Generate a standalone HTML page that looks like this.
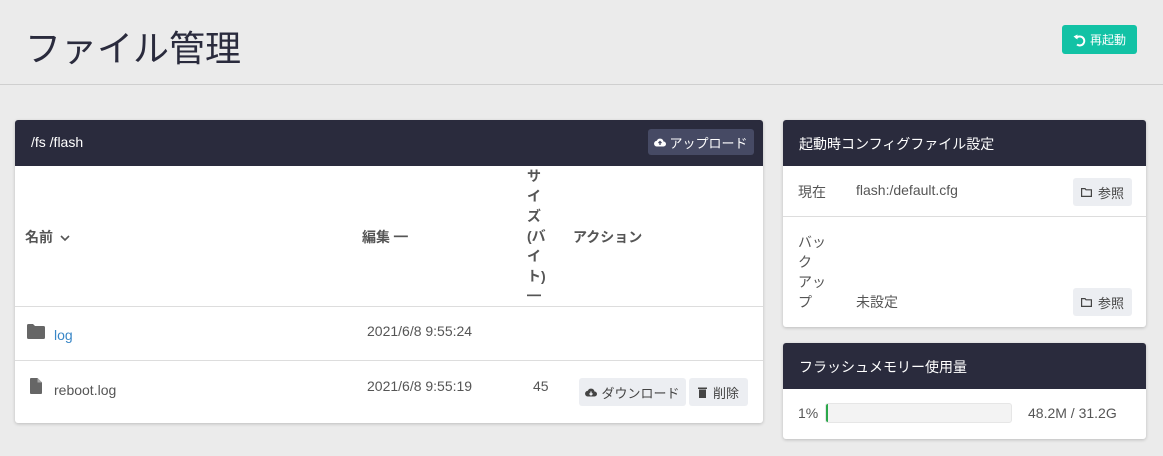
<!DOCTYPE html>
<html><head><meta charset="utf-8"><style>
*{box-sizing:border-box;margin:0;padding:0}
body{width:1163px;height:456px;background:#ebebeb;font-family:"Liberation Sans","Noto Sans CJK JP",sans-serif;color:#555;position:relative;overflow:hidden;font-size:14px}
.a{position:absolute;white-space:nowrap}
.card{position:absolute;background:#fff;box-shadow:0 1px 3px rgba(0,0,0,.2);border-radius:3px;overflow:hidden}
.hd{position:absolute;left:0;right:0;top:0;height:46px;background:#2a2b3d;color:#fff;font-size:14px}
.btn{position:absolute;background:#eceef2;border-radius:3px;color:#444;font-size:13px;display:flex;align-items:center;justify-content:center;gap:6px}
.hr{position:absolute;left:0;right:0;height:1px;background:#ddd}
</style></head><body>
<div class="a" style="left:25px;top:20px;font-size:36px;color:#2a2b3d">ファイル管理</div>
<div style="position:absolute;left:0;right:0;top:84px;height:1px;background:#cfcfcf"></div>
<div class="btn" style="left:1062px;top:25px;width:75px;height:29px;background:#12c2a5;color:#fff;font-size:12px;gap:4px">
<svg width="13" height="14" viewBox="0 0 13 14"><path d="M3 5.5A4.5 4.5 0 1 1 4 11.5" fill="none" stroke="#fff" stroke-width="2"/><path d="M0.5 3.5L4.5 1.5L4.5 6.5Z" fill="#fff"/></svg>再起動</div>

<div class="card" style="left:15px;top:120px;width:748px;height:303px">
 <div class="hd"><span class="a" style="left:16px;top:14px">/fs /flash</span>
  <div class="btn" style="left:633px;top:9px;width:106px;height:26px;background:#464a64;color:#fff;gap:3px">
  <svg width="12" height="10" viewBox="0 0 12 10"><path d="M3 9.5H9.5A2.5 2.5 0 0 0 9.5 4.5A3.5 3.5 0 0 0 2.8 3.8A2.8 2.8 0 0 0 3 9.5Z" fill="#fff"/><path d="M6 8V4.5M4.5 6L6 4.5L7.5 6" stroke="#464a64" stroke-width="1.3" fill="none"/></svg>アップロード</div></div>
 <div class="a" style="left:10px;top:107px;font-weight:bold;color:#555">名前 <svg width="10" height="7" viewBox="0 0 10 7" style="margin-left:3px"><path d="M1 1L5 5L9 1" fill="none" stroke="#555" stroke-width="1.6"/></svg></div>
 <div class="a" style="left:347px;top:107px;font-weight:bold">編集 ━</div>
 <div class="a" style="left:512px;top:46px;font-weight:bold;line-height:20px;white-space:normal;width:20px">サ<br>イ<br>ズ<br>(バ<br>イ<br>ト)<br>━</div>
 <div class="a" style="left:558px;top:107px;font-weight:bold">アクション</div>
 <div class="hr" style="top:186px"></div>
 <svg class="a" style="left:12px;top:204px" width="18" height="15" viewBox="0 0 18 15"><path d="M0 1.5Q0 0 1.5 0H6L8 2H16.5Q18 2 18 3.5V13.5Q18 15 16.5 15H1.5Q0 15 0 13.5Z" fill="#666"/></svg>
 <div class="a" style="left:39px;top:207px;color:#3a87c7">log</div>
 <div class="a" style="left:352px;top:203px">2021/6/8 9:55:24</div>
 <div class="hr" style="top:240px"></div>
 <svg class="a" style="left:15px;top:258px" width="12" height="16" viewBox="0 0 12 16"><path d="M0 1Q0 0 1 0H7.5L12 4.5V15Q12 16 11 16H1Q0 16 0 15Z" fill="#666"/><path d="M7.5 0V4.5H12" fill="#aaa"/></svg>
 <div class="a" style="left:39px;top:262px">reboot.log</div>
 <div class="a" style="left:352px;top:258px">2021/6/8 9:55:19</div>
 <div class="a" style="left:518px;top:258px">45</div>
 <div class="btn" style="left:564px;top:258px;width:107px;height:28px;gap:4px">
 <svg width="12" height="10" viewBox="0 0 12 10"><path d="M3 9.5H9.5A2.5 2.5 0 0 0 9.5 4.5A3.5 3.5 0 0 0 2.8 3.8A2.8 2.8 0 0 0 3 9.5Z" fill="#444"/><path d="M6 4.5V8M4.5 6.5L6 8L7.5 6.5" stroke="#eceef2" stroke-width="1.3" fill="none"/></svg>ダウンロード</div>
 <div class="btn" style="left:674px;top:258px;width:59px;height:28px">
 <svg width="9" height="11" viewBox="0 0 9 11"><rect x="0" y="0.5" width="9" height="1.5" fill="#444"/><rect x="1" y="2.5" width="7" height="8.5" fill="#444"/></svg>削除</div>
</div>

<div class="card" style="left:783px;top:120px;width:363px;height:207px">
 <div class="hd"><span class="a" style="left:16px;top:14px">起動時コンフィグファイル設定</span></div>
 <div class="a" style="left:15px;top:62px">現在</div>
 <div class="a" style="left:73px;top:62px">flash:/default.cfg</div>
 <div class="btn" style="left:290px;top:58px;width:59px;height:28px"><svg width="11" height="9" viewBox="0 0 11 9"><path d="M0.6 0.6H4L5 1.8H10.4V8.4H0.6Z" fill="none" stroke="#444" stroke-width="1.2"/></svg>参照</div>
 <div class="hr" style="top:96px"></div>
 <div class="a" style="left:15px;top:112px;line-height:20px;white-space:normal;width:36px">バッ<br>ク<br>アッ<br>プ</div>
 <div class="a" style="left:73px;top:172px">未設定</div>
 <div class="btn" style="left:290px;top:168px;width:59px;height:28px"><svg width="11" height="9" viewBox="0 0 11 9"><path d="M0.6 0.6H4L5 1.8H10.4V8.4H0.6Z" fill="none" stroke="#444" stroke-width="1.2"/></svg>参照</div>
</div>

<div class="card" style="left:783px;top:343px;width:363px;height:96px">
 <div class="hd"><span class="a" style="left:16px;top:14px">フラッシュメモリー使用量</span></div>
 <div class="a" style="left:15px;top:62px">1%</div>
 <div style="position:absolute;left:42px;top:60px;width:187px;height:20px;background:#f3f3f3;border:1px solid #e6e6e6;border-radius:3px;overflow:hidden"><div style="width:2px;height:100%;background:#2aa84a"></div></div>
 <div class="a" style="left:245px;top:62px">48.2M / 31.2G</div>
</div>
</body></html>
